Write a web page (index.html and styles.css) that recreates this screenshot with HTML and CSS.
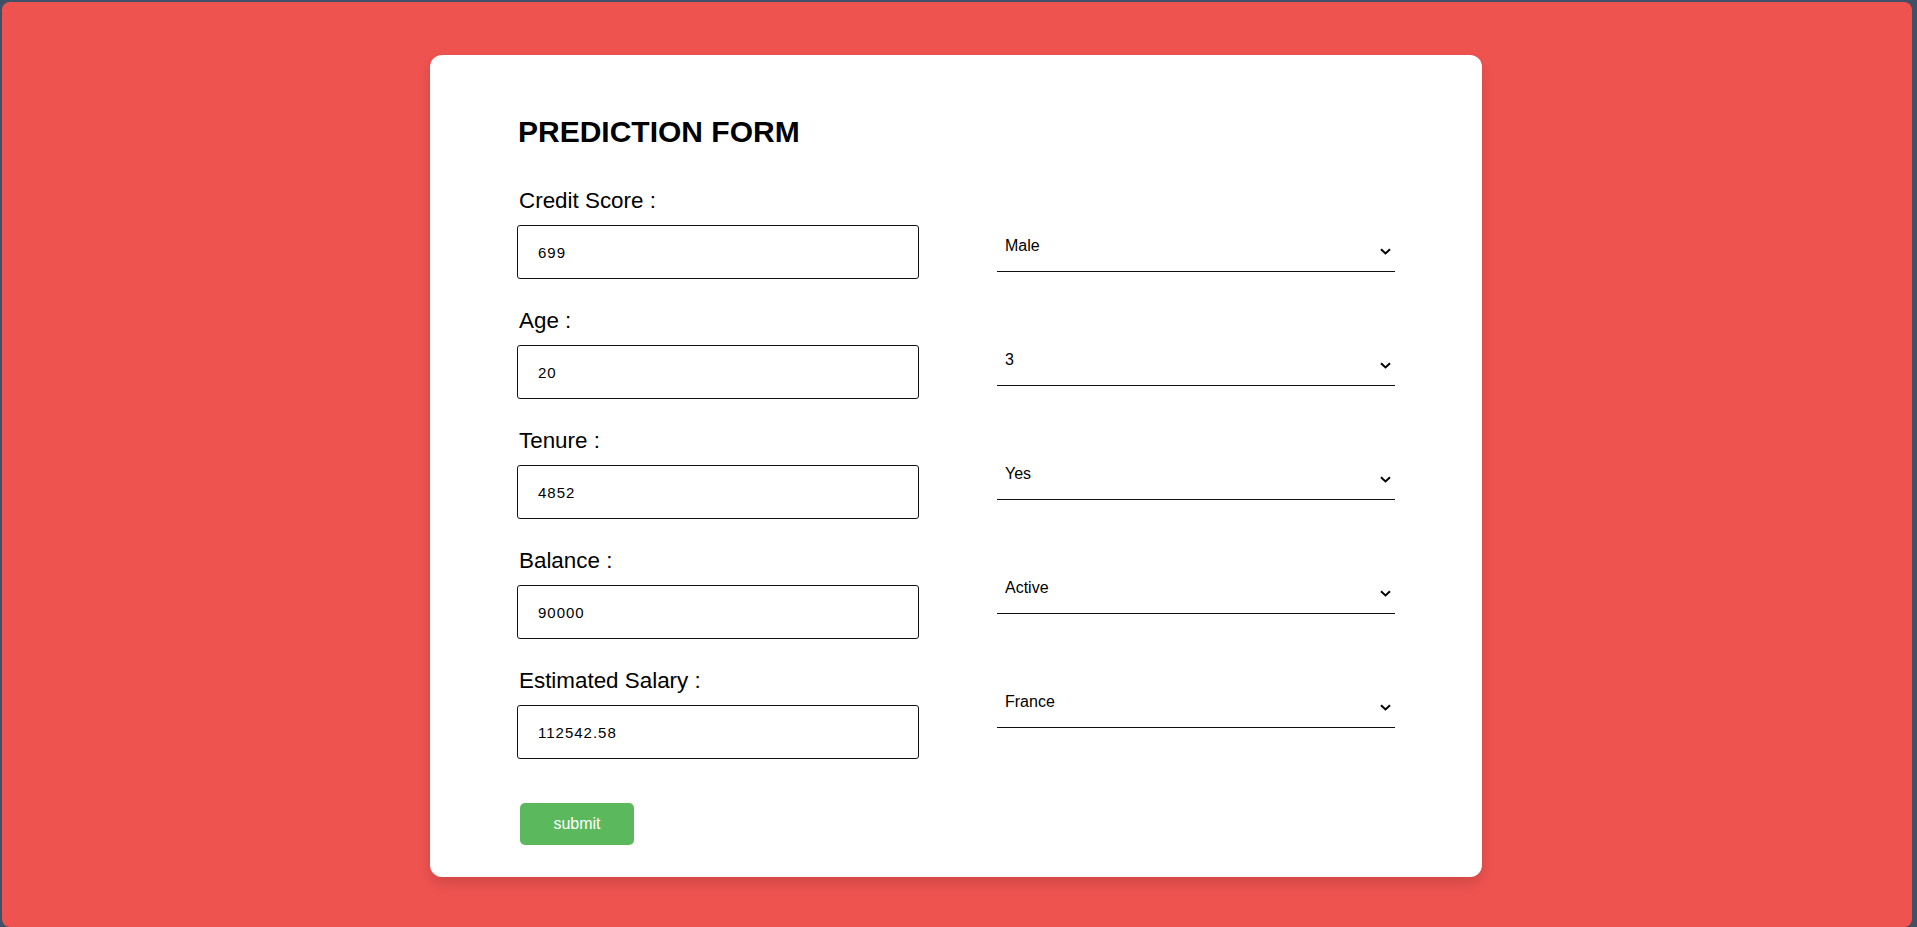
FILE: index.html
```html
<!DOCTYPE html>
<html lang="en">
<head>
<meta charset="utf-8">
<title>Prediction Form</title>
<link rel="stylesheet" href="styles.css">
</head>
<body>
<div class="frame">
  <main class="card">
    <h1 class="title">PREDICTION FORM</h1>
    <form class="form">
      <div class="form-grid">
        <div class="col-left">
          <div class="field">
            <label class="label" for="credit">Credit Score :</label>
            <input class="input" id="credit" type="text" value="699">
          </div>
          <div class="field">
            <label class="label" for="age">Age :</label>
            <input class="input" id="age" type="text" value="20">
          </div>
          <div class="field">
            <label class="label" for="tenure">Tenure :</label>
            <input class="input" id="tenure" type="text" value="4852">
          </div>
          <div class="field">
            <label class="label" for="balance">Balance :</label>
            <input class="input" id="balance" type="text" value="90000">
          </div>
          <div class="field">
            <label class="label" for="salary">Estimated Salary :</label>
            <input class="input" id="salary" type="text" value="112542.58">
          </div>
        </div>
        <div class="col-right">
          <div class="select-wrap">
            <select class="select">
              <option selected>Male</option>
              <option>Female</option>
            </select>
            <svg class="chevron" width="11" height="7" viewBox="0 0 11 7"><path d="M1 1.2 L5.5 5.4 L10 1.2" fill="none" stroke="#000" stroke-width="2"/></svg>
          </div>
          <div class="select-wrap">
            <select class="select">
              <option>1</option>
              <option>2</option>
              <option selected>3</option>
              <option>4</option>
            </select>
            <svg class="chevron" width="11" height="7" viewBox="0 0 11 7"><path d="M1 1.2 L5.5 5.4 L10 1.2" fill="none" stroke="#000" stroke-width="2"/></svg>
          </div>
          <div class="select-wrap">
            <select class="select">
              <option selected>Yes</option>
              <option>No</option>
            </select>
            <svg class="chevron" width="11" height="7" viewBox="0 0 11 7"><path d="M1 1.2 L5.5 5.4 L10 1.2" fill="none" stroke="#000" stroke-width="2"/></svg>
          </div>
          <div class="select-wrap">
            <select class="select">
              <option selected>Active</option>
              <option>Inactive</option>
            </select>
            <svg class="chevron" width="11" height="7" viewBox="0 0 11 7"><path d="M1 1.2 L5.5 5.4 L10 1.2" fill="none" stroke="#000" stroke-width="2"/></svg>
          </div>
          <div class="select-wrap">
            <select class="select">
              <option selected>France</option>
              <option>Germany</option>
              <option>Spain</option>
            </select>
            <svg class="chevron" width="11" height="7" viewBox="0 0 11 7"><path d="M1 1.2 L5.5 5.4 L10 1.2" fill="none" stroke="#000" stroke-width="2"/></svg>
          </div>
        </div>
      </div>
      <button class="submit" type="submit">submit</button>
    </form>
  </main>
</div>
</body>
</html>
```

FILE: styles.css
```css
html, body {
  margin: 0;
  padding: 0;
}

body {
  background: #3f5166;
  font-family: "Liberation Sans", Arial, sans-serif;
  color: #000;
  height: 927px;
  overflow: hidden;
}

.frame {
  margin: 2px 5px 0 2px;
  height: 925px;
  background: #ef5350;
  border-radius: 8px;
  padding: 53px 2px 0 0;
  box-sizing: border-box;
}

.card {
  width: 1052px;
  box-sizing: border-box;
  margin: 0 auto;
  background: #fff;
  border-radius: 12px;
  box-shadow: 0 6px 14px rgba(0, 0, 0, 0.14);
  padding: 60px 87px 32px;
}

.title {
  margin: 0;
  padding-left: 1px;
  font-size: 30px;
  line-height: 34px;
  font-weight: 700;
}

.form {
  margin-top: 39px;
}

.form-grid {
  display: grid;
  grid-template-columns: 402px 398px;
  justify-content: space-between;
}

.col-left {
  display: flex;
  flex-direction: column;
  gap: 29px;
}

.field {
  display: flex;
  flex-direction: column;
  gap: 12px;
}

.label {
  font-size: 22.4px;
  line-height: 25px;
  padding-left: 2px;
}

.input {
  width: 402px;
  height: 54px;
  box-sizing: border-box;
  border: 1px solid #111;
  border-radius: 3px;
  padding: 0 20px;
  font-family: "Liberation Sans", Arial, sans-serif;
  font-size: 15px;
  letter-spacing: 1px;
  color: #000;
  background: #fff;
  outline: none;
}

.col-right {
  display: flex;
  flex-direction: column;
  gap: 72px;
  padding-top: 42px;
}

.select-wrap {
  position: relative;
  width: 398px;
  height: 42px;
}

.select {
  -webkit-appearance: none;
  appearance: none;
  width: 398px;
  height: 42px;
  box-sizing: border-box;
  border: none;
  border-bottom: 1px solid #111;
  border-radius: 0;
  background: #fff;
  padding: 0 24px 10px 8px;
  font-family: "Liberation Sans", Arial, sans-serif;
  font-size: 16px;
  color: #000;
  outline: none;
}

.chevron {
  position: absolute;
  right: 4px;
  top: 18px;
  pointer-events: none;
}

.submit {
  display: block;
  margin: 44px 0 0 3px;
  width: 114px;
  height: 42px;
  border: none;
  border-radius: 5px;
  background: #5cb85c;
  color: #fff;
  font-family: "Liberation Sans", Arial, sans-serif;
  font-size: 16px;
  padding: 0;
  cursor: pointer;
}
```
